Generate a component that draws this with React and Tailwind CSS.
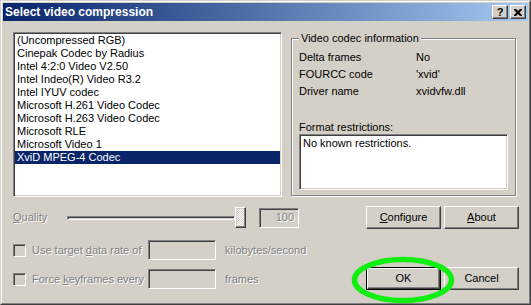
import React from "react";

// Win2000-style "Select video compression" dialog
const codecs = [
  "(Uncompressed RGB)",
  "Cinepak Codec by Radius",
  "Intel 4:2:0 Video V2.50",
  "Intel Indeo(R) Video R3.2",
  "Intel IYUV codec",
  "Microsoft H.261 Video Codec",
  "Microsoft H.263 Video Codec",
  "Microsoft RLE",
  "Microsoft Video 1",
  "XviD MPEG-4 Codec",
];

const raised =
  "bg-[#d4d0c8] border border-t-white border-l-white border-r-[#404040] border-b-[#404040] shadow-[inset_-1px_-1px_0_#808080,inset_1px_1px_0_#d4d0c8]";
const sunken =
  "border border-t-[#808080] border-l-[#808080] border-r-white border-b-white shadow-[inset_1px_1px_0_#404040,inset_-1px_-1px_0_#d4d0c8]";
const disabledText = "text-[#808080] [text-shadow:1px_1px_0_#ffffff]";

function Button({ children, isDefault }) {
  if (isDefault) {
    return (
      <div className="w-[75px] h-[23px] border border-black">
        <div className={`${raised} w-full h-full flex items-center justify-center`}>{children}</div>
      </div>
    );
  }
  return (
    <div className={`${raised} w-[75px] h-[23px] flex items-center justify-center`}>{children}</div>
  );
}

function CheckRow({ label, unit, className }) {
  return (
    <div className={`h-[20px] flex items-center ${className}`}>
      <div className={`${sunken} w-[13px] h-[13px] bg-[#d4d0c8]`} />
      <div className={`ml-[6px] w-[116px] ${disabledText}`}>{label}</div>
      <div className={`${sunken} w-[68px] h-[20px] bg-[#d4d0c8]`} />
      <div className={`ml-[9px] ${disabledText}`}>{unit}</div>
    </div>
  );
}

export default function App() {
  const selected = 9;

  return (
    <div className="relative w-[531px] h-[305px] bg-[#d4d0c8] border border-t-[#d4d0c8] border-l-[#d4d0c8] border-r-[#404040] border-b-[#404040] font-['Liberation_Sans',Arial,sans-serif] text-[11px] leading-[13px] text-black">
      <div className="w-full h-full border border-t-white border-l-white border-r-[#808080] border-b-[#808080] p-px flex flex-col">
        {/* title bar */}
        <div className="h-[18px] flex items-center bg-linear-to-r from-[#0a246a] to-[#a6caf0] pl-[2px] pr-[2px]">
          <span className="text-white font-bold text-[12px] leading-none">Select video compression</span>
          <div className="ml-auto flex gap-[2px]">
            <div className={`${raised} w-[16px] h-[14px] flex items-center justify-center font-bold text-[11px] leading-none`}>?</div>
            <div className={`${raised} w-[16px] h-[14px] flex items-center justify-center`}>
              <svg width="8" height="7" viewBox="0 0 8 7">
                <path d="M0 0h2l2 2 2-2h2v1L5.5 3.5 8 6v1H6L4 5 2 7H0V6l2.5-2.5L0 1z" fill="#000" />
              </svg>
            </div>
          </div>
        </div>

        {/* list + codec info */}
        <div className="flex mt-[11px] ml-[10px]">
          <div className={`${sunken} w-[269px] h-[165px] bg-white p-px`}>
            {codecs.map((c, i) => (
              <div
                key={c}
                className={`h-[13px] pl-[2px] whitespace-nowrap ${i === selected ? "bg-[#0a246a] text-white" : ""}`}
              >
                {c}
              </div>
            ))}
          </div>

          <fieldset className="ml-[9px] w-[224px] h-[164px] border border-[#808080] shadow-[inset_1px_1px_0_#ffffff,1px_1px_0_#ffffff] px-[7px]">
            <legend className="px-[2px] bg-[#d4d0c8]">Video codec information</legend>
            <div className="mt-[6px] flex flex-col gap-[4px]">
              {[
                ["Delta frames", "No"],
                ["FOURCC code", "'xvid'"],
                ["Driver name", "xvidvfw.dll"],
              ].map(([k, v]) => (
                <div key={k} className="flex h-[13px]">
                  <div className="w-[117px]">{k}</div>
                  <div>{v}</div>
                </div>
              ))}
            </div>
            <div className="mt-[23px]">Format restrictions:</div>
            <div className={`${sunken} w-[209px] h-[56px] bg-white pl-[3px] pt-[2px]`}>No known restrictions.</div>
          </fieldset>
        </div>

        {/* lower controls */}
        <div className="flex mt-[9px]">
          <div className="pl-[10px] flex flex-col">
            <div className="h-[23px] flex items-center">
              <div className={`w-[54px] ${disabledText}`}>
                <span className="underline">Q</span>uality
              </div>
              <div className="flex items-center">
                <div className="w-[168px] h-[4px] border border-t-[#808080] border-l-[#808080] border-r-white border-b-white shadow-[inset_1px_1px_0_#404040]" />
                <div className={`${raised} w-[11px] h-[21px] bg-[image:repeating-conic-gradient(#ffffff_0%_25%,#d4d0c8_0%_50%)] bg-[length:2px_2px]`} />
              </div>
              <div className={`${sunken} ml-[13px] w-[40px] h-[20px] bg-[#d4d0c8] flex items-center justify-end pr-[4px] ${disabledText}`}>
                100
              </div>
            </div>
            <CheckRow
              className="mt-[11px]"
              label={<>Use target <span className="underline">d</span>ata rate of</>}
              unit="kilobytes/second"
            />
            <CheckRow
              className="mt-[9px]"
              label={<>Force <span className="underline">k</span>eyframes every</>}
              unit="frames"
            />
          </div>

          <div className="ml-auto mr-[9px] flex flex-col">
            <div className="flex gap-[3px]">
              <Button><span><span className="underline">C</span>onfigure</span></Button>
              <Button><span><span className="underline">A</span>bout</span></Button>
            </div>
            <div className="flex gap-[3px] mt-[38px]">
              <Button isDefault>OK</Button>
              <Button>Cancel</Button>
            </div>
          </div>
        </div>
      </div>

      {/* green highlight around OK */}
      <svg className="absolute left-[350px] top-[255px]" width="104" height="48" viewBox="0 0 104 48">
        <ellipse cx="52" cy="24" rx="48.5" ry="20.5" fill="none" stroke="#11ee11" strokeWidth="5.5" />
      </svg>
    </div>
  );
}
